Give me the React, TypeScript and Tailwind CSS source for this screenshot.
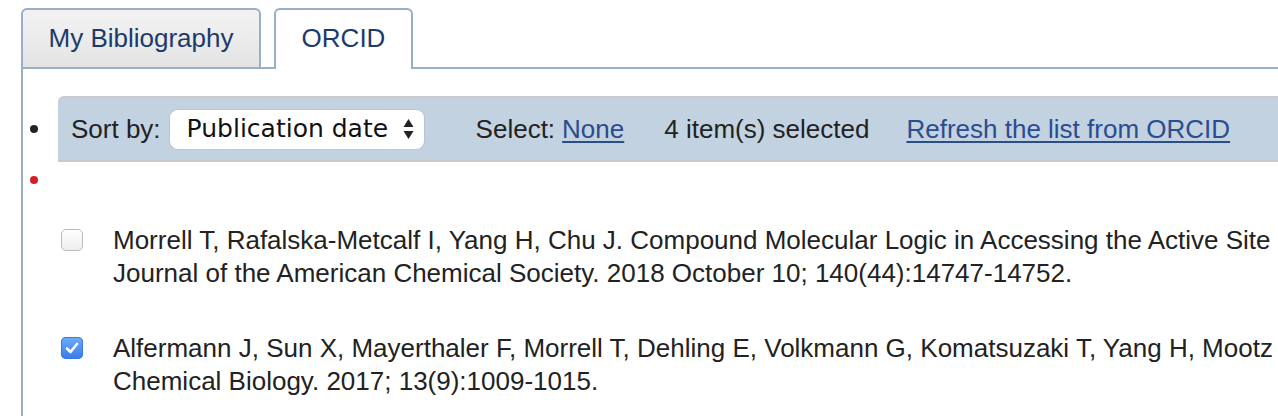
import React from 'react'

type Pub = {
    id: number
    lines: string[]
    checked: boolean
}

const pubs: Pub[] = [
    {
        id: 1,
        lines: [
            'Morrell T, Rafalska-Metcalf I, Yang H, Chu J. Compound Molecular Logic in Accessing the Active Site of the Enzyme.',
            'Journal of the American Chemical Society. 2018 October 10; 140(44):14747-14752.',
        ],
        checked: false,
    },
    {
        id: 2,
        lines: [
            'Alfermann J, Sun X, Mayerthaler F, Morrell T, Dehling E, Volkmann G, Komatsuzaki T, Yang H, Mootz HD. FRET monitoring.',
            'Chemical Biology. 2017; 13(9):1009-1015.',
        ],
        checked: true,
    },
]

function Checkbox({ checked }: { checked: boolean }) {
    if (checked) {
        return (
            <span className="mt-[5px] flex h-[22px] w-[22px] shrink-0 items-center justify-center rounded-[5px] bg-gradient-to-b from-[#6eacfb] to-[#3679ee] shadow-[inset_0_0_0_1px_#3a7ae0]">
                <svg width="14" height="12" viewBox="0 0 14 12" fill="none">
                    <path d="M2 6.5 L5.5 10 L12 2" stroke="white" strokeWidth="2.6" strokeLinecap="round" strokeLinejoin="round" />
                </svg>
            </span>
        )
    }
    return (
        <span className="mt-[5px] block h-[22px] w-[22px] shrink-0 rounded-[5px] border border-[#bcbcbc] bg-gradient-to-b from-white to-[#eeeeee]" />
    )
}

export default function App() {
    return (
        <div className="relative h-[416px] w-[1278px] overflow-hidden bg-white font-['Liberation_Sans',Arial,sans-serif] text-[#222]">
            {/* Tabs */}
            <div className="flex gap-[13px] pl-[21px] pt-[8px]">
                <div className="flex h-[59px] w-[240px] items-center justify-center rounded-t-[6px] border-2 border-b-0 border-[#98afc7] bg-gradient-to-b from-[#f2f2f2] via-[#ececec] to-[#e3e3e3] text-[26px] text-[#1c3a6c]">
                    My Bibliography
                </div>
                <div className="relative z-10 -mb-[2px] flex h-[61px] w-[139px] items-center justify-center rounded-t-[6px] border-2 border-b-0 border-[#98afc7] bg-white pb-[2px] text-[26px] text-[#1c3a6c]">
                    ORCID
                </div>
            </div>

            {/* Panel */}
            <div className="ml-[21px] h-[400px] border-l-2 border-t-2 border-[#98afc7] pt-[27px]">
                <div className="flex items-center">
                    <div className="flex w-[35px] shrink-0 pl-[7px]">
                        <span className="block h-[8px] w-[8px] rounded-full bg-[#222]" />
                    </div>
                    <div className="flex h-[66px] flex-1 items-center whitespace-nowrap rounded-tl-[6px] border-y-2 border-[#c9c9c9] bg-[#c2d2e1] pl-[13px] text-[26px]">
                        <span>Sort by:</span>
                        <div className="ml-[9px] flex h-[39px] w-[254px] items-center justify-between rounded-[8px] bg-white pl-[17px] pr-[10px] shadow-[0_0_0_1px_#b8c6d3] font-['DejaVu_Sans',Verdana,sans-serif] text-[25px] text-[#111]">
                            <span>Publication date</span>
                            <svg width="11" height="22" viewBox="0 0 11 22">
                                <path d="M5.5 1 L10.5 9 L0.5 9 Z" fill="#222" />
                                <path d="M0.5 13 L10.5 13 L5.5 21 Z" fill="#222" />
                            </svg>
                        </div>
                        <span className="ml-[52px]">Select:</span>
                        <a className="ml-[7px] text-[#2b4c8f] underline decoration-[2px] underline-offset-[3px]">None</a>
                        <span className="ml-[40px]">4 item(s) selected</span>
                        <a className="ml-[37px] text-[#2b4c8f] underline decoration-[2px] underline-offset-[3px]">
                            Refresh the list from ORCID
                        </a>
                    </div>
                </div>

                <div className="flex h-[36px] items-center">
                    <div className="flex w-[35px] shrink-0 pl-[7px]">
                        <span className="block h-[8px] w-[8px] rounded-full bg-[#d41f28]" />
                    </div>
                </div>

                {/* Publications */}
                <div className="mt-[26px] flex flex-col gap-[43px] pl-[38px]">
                    {pubs.map((p) => (
                        <div key={p.id} className="flex items-start gap-[30px]">
                            <Checkbox checked={p.checked} />
                            <div className="whitespace-nowrap text-[26px] leading-[32.5px]">
                                {p.lines.map((l, i) => (
                                    <div key={i}>{l}</div>
                                ))}
                            </div>
                        </div>
                    ))}
                </div>
            </div>
        </div>
    )
}
